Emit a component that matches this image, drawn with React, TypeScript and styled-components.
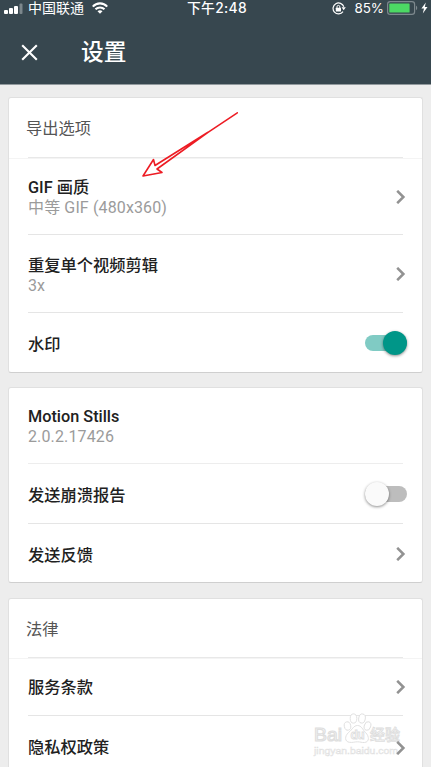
import React from 'react'
import styled, { createGlobalStyle } from 'styled-components'

const GlobalStyle = createGlobalStyle`
  * {
    box-sizing: border-box;
  }
  body {
    margin: 0;
    background: #ededed;
    font-family: Roboto, 'Noto Sans CJK SC', sans-serif;
    overflow: hidden;
  }
`;

const Screen = styled.div`
  position: relative;
  width: 431px;
  height: 767px;
  overflow: hidden;
  background: #ededed;
`;

const Header = styled.header`
  height: 85px;
  background: #37474f;
  border-bottom: 1px solid #929a9e;
  color: #fff;
`;

const StatusBar = styled.div`
  display: grid;
  grid-template-columns: 1fr auto 1fr;
  align-items: center;
  height: 16px;
  padding: 0 3px 0 4px;
  font-family: Inter, 'Noto Sans CJK SC', sans-serif;
  font-size: 14px;
  line-height: 16px;
  white-space: nowrap;
`;

const StatusGroup = styled.div<{ $end?: boolean }>`
  display: flex;
  align-items: center;
  justify-content: ${({ $end }) => ($end ? 'flex-end' : 'flex-start')};
`;

const Carrier = styled.span`
  margin: 0 8px 0 5px;
`;

const Time = styled.span`
  padding-left: 2px;
  font-weight: 500;
  font-size: 13.8px;
  letter-spacing: 0.35px;
`;

const BatteryLevel = styled.span`
  margin: 0 3px 0 8px;
  font-size: 13.4px;
`;

const TitleBar = styled.div`
  display: flex;
  align-items: center;
  height: 68px;
  padding: 4px 0 0 21px;
`;

const Title = styled.h1`
  margin: 0 0 0 43px;
  padding-top: 2px;
  font-size: 22.7px;
  font-weight: 500;
  line-height: 34px;
`;

const Main = styled.main`
  display: flex;
  flex-direction: column;
  gap: 14px;
  padding: 12px 8px 0;
`;

const Card = styled.section<{ $offset?: number }>`
  margin-top: ${({ $offset = 0 }) => $offset}px;
  background: #fff;
  border: 1px solid #e0e0e0;
  border-bottom-color: #cfcfcf;
  border-radius: 3px;
`;

const CardHeading = styled.h2<{ $height: number }>`
  display: flex;
  align-items: center;
  height: ${({ $height }) => $height}px;
  margin: 0;
  padding: 0 0 2px 17px;
  border-bottom: 1px solid #f4f4f4;
  color: #555;
  font-size: 16.25px;
  font-weight: 400;
`;

const Row = styled.div<{ $height: number; $line?: string; $top?: number }>`
  display: flex;
  align-items: center;
  justify-content: space-between;
  height: ${({ $height }) => $height}px;
  margin: 0 19px;
  padding-top: ${({ $top = 2 }) => $top}px;
  border-bottom: ${({ $line }) => ($line ? `1px solid ${$line}` : 'none')};
`;

const HeadingLine = styled.div`
  height: 1px;
  margin: -2px 19px 1px;
  background: #e8e8e8;
`;

const Labels = styled.div`
  display: flex;
  flex-direction: column;
  padding-top: 2px;
  white-space: nowrap;
`;

const Label = styled.span`
  color: #212121;
  font-size: 16.25px;
  font-weight: 500;
  line-height: 20px;
`;

const Detail = styled.span`
  color: #9b9b9b;
  font-size: 16px;
  line-height: 20px;
  letter-spacing: 0.13px;
`;

const SwitchTrack = styled.div<{ $on?: boolean }>`
  display: flex;
  align-items: center;
  justify-content: ${({ $on }) => ($on ? 'flex-end' : 'flex-start')};
  width: 42px;
  height: 16px;
  margin: -1px -4px 0 0;
  border-radius: 8px;
  background: ${({ $on }) => ($on ? '#80cbc4' : '#bdbdbd')};
`;

const SwitchThumb = styled.div<{ $on?: boolean }>`
  flex: none;
  width: 24px;
  height: 24px;
  border-radius: 50%;
  background: ${({ $on }) => ($on ? '#009688' : '#fafafa')};
  box-shadow: 0 1px 3px rgba(0, 0, 0, 0.45);
`;

const ArrowOverlay = styled.svg`
  position: absolute;
  left: 138px;
  top: 108px;
`;

const Watermark = styled.div`
  position: absolute;
  left: 312px;
  top: 712px;
`;

const Signal = () => (
    <svg width="19" height="11" viewBox="0 0 19 11" fill="#fff">
        <rect x="0" y="7" width="4" height="4" rx="1" />
        <rect x="5" y="5" width="4" height="6" rx="1" />
        <rect x="10" y="3" width="4" height="8" rx="1" />
        <rect x="15.5" y="0.5" width="3" height="10.5" rx="1" opacity="0.35" />
    </svg>
);

const Wifi = () => (
    <svg width="16" height="12" viewBox="0 0 16 12" fill="none" stroke="#fff" strokeWidth="2.1">
        <path d="M0.8 4.6C4.7 0.3 11.3 0.3 15.2 4.6" />
        <path d="M3.5 7.3C6 4.8 10 4.8 12.5 7.3" />
        <path d="M8 11.7L5.5 9.2C6.9 7.9 9.1 7.9 10.5 9.2Z" fill="#fff" stroke="none" />
    </svg>
);

const RotationLock = () => (
    <svg width="14" height="13" viewBox="0 0 14 13" fill="none" stroke="#fff">
        <path d="M11.8 4.8A5.5 5.5 0 1 0 11 9.7" strokeWidth="1.2" />
        <path d="M9.6 5.3h4.2l-2.1 3z" fill="#fff" stroke="none" />
        <rect x="3.8" y="5.7" width="5.2" height="3.8" rx="0.5" fill="#fff" stroke="none" />
        <path d="M5 6V4.8a1.4 1.4 0 0 1 2.8 0V6" strokeWidth="1" />
    </svg>
);

const Battery = () => (
    <svg width="31" height="14" viewBox="0 0 31 14">
        <rect x="0.6" y="0.6" width="27" height="12.8" rx="2.7" fill="none" stroke="#7d888d" strokeWidth="1.2" />
        <rect x="2.3" y="2.5" width="20.3" height="9" rx="0.6" fill="#4cd964" />
        <path d="M29 4.8c1.6.4 1.6 4 0 4.4z" fill="#7d888d" />
    </svg>
);

const BoltSvg = styled.svg`
  margin-left: 3px;
`;

const Bolt = () => (
    <BoltSvg width="7" height="12" viewBox="0 0 7 12">
        <path d="M4.8 0.5L0.4 6.6H3L1.8 11.4L6.5 5H3.8Z" fill="#fff" />
    </BoltSvg>
);

const CloseIcon = () => (
    <svg width="17" height="17" viewBox="0 0 17 17">
        <path d="M1.2 1.2L15.8 15.8M15.8 1.2L1.2 15.8" stroke="#fff" strokeWidth="2.1" />
    </svg>
);

// stays above the watermark
const ChevronSvg = styled.svg`
  position: relative;
  z-index: 1;
  flex: none;
  margin: -1px -3px 0 0;
`;

const Chevron = () => (
    <ChevronSvg width="10" height="14" viewBox="0 0 10 14">
        <path d="M1.2 0.8L7.4 7L1.2 13.2" fill="none" stroke="#929292" strokeWidth="2.5" />
    </ChevronSvg>
);

const Switch = ({ on }: { on?: boolean }) => (
    <SwitchTrack $on={on}>
        <SwitchThumb $on={on} />
    </SwitchTrack>
);

const BaiduMark = () => (
    <Watermark>
        <svg width="96" height="46" viewBox="0 0 96 46" fill="#fff" stroke="#dedede" strokeWidth="0.9">
            <g fontFamily="'Liberation Sans', 'Noto Sans CJK SC', sans-serif" fontWeight="700">
                <text x="2" y="28.5" fontSize="19" fontWeight="400" strokeWidth="1.2" textLength="28" lengthAdjust="spacingAndGlyphs">Bai</text>
                <text x="58" y="28" fontSize="15" fontWeight="500" textLength="30">经验</text>
            </g>
            <ellipse cx="35.5" cy="14" rx="3.2" ry="4.2" transform="rotate(-12 35.5 14)" />
            <ellipse cx="41.5" cy="6.5" rx="3.3" ry="4.6" />
            <ellipse cx="50" cy="6.5" rx="3.3" ry="4.6" transform="rotate(10 50 6.5)" />
            <ellipse cx="55.5" cy="14" rx="3.2" ry="4.4" transform="rotate(18 55.5 14)" />
            <path d="M45.5 13.5c4 0 5 4 8 7 4 4 4 9.5-1 10-3 .2-4-.7-7-.7s-5 1-8 .5c-5-.6-5-6-1-9.8 4-3 5-7 9-7z" />
            <text x="38.5" y="26.5" fontFamily="'Liberation Sans', sans-serif" fontSize="12" fontWeight="700" textLength="14">du</text>
            <text x="2" y="42" fontFamily="'Liberation Sans', sans-serif" fontSize="9.5" fill="#f4f4f4" strokeWidth="0.4" textLength="84" lengthAdjust="spacingAndGlyphs">jingyan.baidu.com</text>
        </svg>
    </Watermark>
);

export default function App() {
    return (
        <Screen>
            <GlobalStyle />
            <Header>
                <StatusBar>
                    <StatusGroup>
                        <Signal />
                        <Carrier>中国联通</Carrier>
                        <Wifi />
                    </StatusGroup>
                    <Time>下午2:48</Time>
                    <StatusGroup $end>
                        <RotationLock />
                        <BatteryLevel>85%</BatteryLevel>
                        <Battery />
                        <Bolt />
                    </StatusGroup>
                </StatusBar>
                <TitleBar>
                    <CloseIcon />
                    <Title>设置</Title>
                </TitleBar>
            </Header>

            <Main>
                <Card>
                    <CardHeading $height={61}>导出选项</CardHeading>
                    <HeadingLine />
                    <Row $height={76} $line="#e5e5e5" $top={1}>
                        <Labels>
                            <Label>GIF 画质</Label>
                            <Detail>中等 GIF (480x360)</Detail>
                        </Labels>
                        <Chevron />
                    </Row>
                    <Row $height={78} $line="#e5e5e5">
                        <Labels>
                            <Label>重复单个视频剪辑</Label>
                            <Detail>3x</Detail>
                        </Labels>
                        <Chevron />
                    </Row>
                    <Row $height={59}>
                        <Labels>
                            <Label>水印</Label>
                        </Labels>
                        <Switch on />
                    </Row>
                </Card>

                <Card>
                    <Row $height={76} $line="#ededed" $top={1}>
                        <Labels>
                            <Label>Motion Stills</Label>
                            <Detail>2.0.2.17426</Detail>
                        </Labels>
                    </Row>
                    <Row $height={60} $line="#e5e5e5">
                        <Labels>
                            <Label>发送崩溃报告</Label>
                        </Labels>
                        <Switch />
                    </Row>
                    <Row $height={58} $top={3}>
                        <Labels>
                            <Label>发送反馈</Label>
                        </Labels>
                        <Chevron />
                    </Row>
                </Card>

                <Card $offset={1}>
                    <CardHeading $height={60}>法律</CardHeading>
                    <HeadingLine />
                    <Row $height={57} $line="#e5e5e5" $top={1}>
                        <Label>服务条款</Label>
                        <Chevron />
                    </Row>
                    <Row $height={62}>
                        <Label>隐私权政策</Label>
                        <Chevron />
                    </Row>
                </Card>
            </Main>

            <ArrowOverlay width="104" height="74" viewBox="0 0 104 74" fill="none" stroke="#ed1c24" strokeWidth="1.6" strokeLinejoin="round">
                <path d="M99.3 4.8L70 24.3L17 57.5L15.5 51.5L5 68L24 64.5L19 61L70 24.3Z" />
            </ArrowOverlay>
            <BaiduMark />
        </Screen>
    );
}
